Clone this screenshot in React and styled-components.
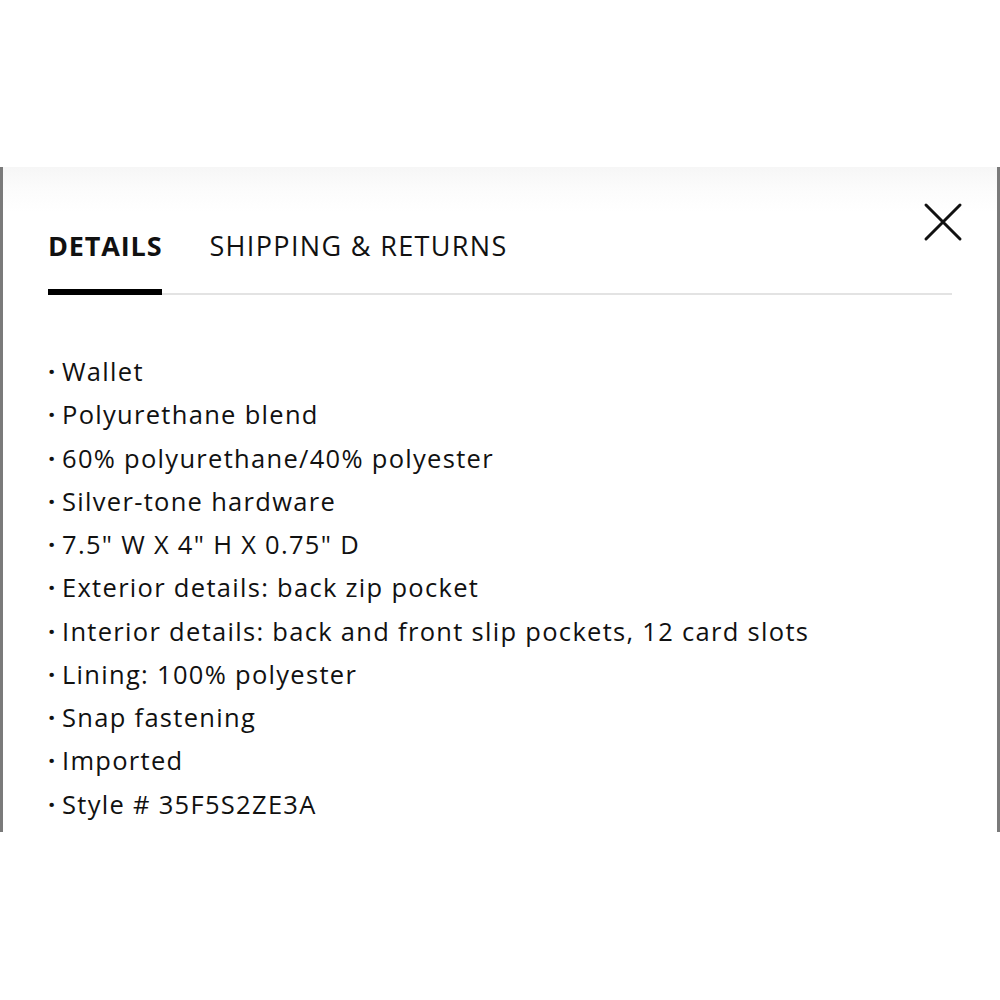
import React from "react";
import styled, { createGlobalStyle } from "styled-components";

const GlobalStyle = createGlobalStyle`
  html, body {
    margin: 0;
    padding: 0;
    background: #ffffff;
  }
  body {
    font-family: "Open Sans", "Lato", sans-serif;
    color: #111;
  }
`;

const Page = styled.div`
  width: 1000px;
  height: 1000px;
  padding-top: 167px;
  box-sizing: border-box;
`;

const Panel = styled.section`
  position: relative;
  height: 665px;
  box-sizing: border-box;
  border-left: 3px solid #7a7a7a;
  border-right: 3px solid #7a7a7a;
  background: linear-gradient(to bottom, #f6f6f6 0px, #fbfbfb 20px, #ffffff 45px);
  padding: 62px 45px 0 45px;
`;

const CloseButton = styled.button`
  position: absolute;
  top: 33px;
  right: 32px;
  width: 44px;
  height: 44px;
  padding: 0;
  border: none;
  background: none;
  cursor: pointer;
  display: flex;
  align-items: center;
  justify-content: center;
`;

const TabBar = styled.div`
  display: flex;
  gap: 47px;
  border-bottom: 2px solid #e3e3e3;
`;

const Tab = styled.div`
  font-size: 27px;
  font-weight: ${(p) => (p.$active ? 700 : 400)};
  letter-spacing: ${(p) => (p.$active ? "0.85px" : "1.35px")};
  color: #111;
  padding-bottom: 26px;
  margin-bottom: -2px;
  border-bottom: 6px solid ${(p) => (p.$active ? "#000" : "transparent")};
  line-height: 34px;
`;

const List = styled.ul`
  list-style: none;
  margin: 0;
  padding: 55px 0 0 0;
`;

const Item = styled.li`
  font-size: 25.5px;
  line-height: 43.25px;
  letter-spacing: 1.3px;
  color: #111;
  display: flex;
  &::before {
    content: "·";
    width: 14px;
    flex-shrink: 0;
    font-weight: 700;
    letter-spacing: 0;
  }
`;

const items = [
  "Wallet",
  "Polyurethane blend",
  "60% polyurethane/40% polyester",
  "Silver-tone hardware",
  '7.5" W X 4" H X 0.75" D',
  "Exterior details: back zip pocket",
  "Interior details: back and front slip pockets, 12 card slots",
  "Lining: 100% polyester",
  "Snap fastening",
  "Imported",
  "Style # 35F5S2ZE3A",
];

export default function App() {
  return (
    <Page>
      <GlobalStyle />
      <Panel>
        <CloseButton aria-label="Close">
          <svg width="40" height="40" viewBox="0 0 40 40">
            <path d="M3 3 L37 37 M37 3 L3 37" stroke="#111" strokeWidth="3" strokeLinecap="round" />
          </svg>
        </CloseButton>
        <TabBar>
          <Tab $active>DETAILS</Tab>
          <Tab>SHIPPING &amp; RETURNS</Tab>
        </TabBar>
        <List>
          {items.map((t) => (
            <Item key={t}>{t}</Item>
          ))}
        </List>
      </Panel>
    </Page>
  );
}
